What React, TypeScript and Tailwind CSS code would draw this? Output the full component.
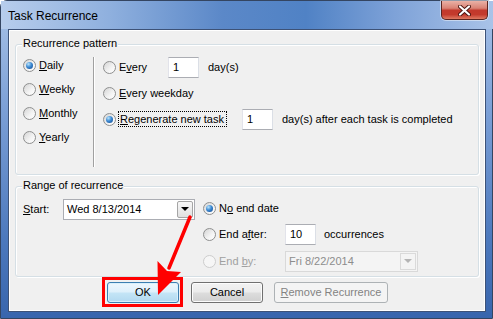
import React from 'react'

function Acc({ t, i }: { t: string; i: number }) {
  return (
    <>
      {t.slice(0, i)}
      <span className="underline underline-offset-[1px] decoration-1">{t[i]}</span>
      {t.slice(i + 1)}
    </>
  )
}

function Radio({ checked = false, disabled = false }: { checked?: boolean; disabled?: boolean }) {
  return (
    <span
      className={
        disabled
          ? 'flex h-[13px] w-[13px] shrink-0 items-center justify-center rounded-full border border-[#cdcdcd] bg-[#f6f6f6]'
          : 'flex h-[13px] w-[13px] shrink-0 items-center justify-center rounded-full border border-[#8e8f8f] bg-[linear-gradient(135deg,#d4d4d4,#f4f4f4_60%,#ffffff)]'
      }
    >
      {checked && (
        <span className="h-[7px] w-[7px] rounded-full bg-[radial-gradient(circle_at_35%_30%,#b9e4fb,#3d8ad3_45%,#164f97_90%)]" />
      )}
    </span>
  )
}

function TextBox({ value, w }: { value: string; w: string }) {
  return (
    <span className={`${w} flex h-[21px] items-center border border-[#abadb3] border-l-[#e2e3ea] border-r-[#dbdfe6] bg-white pl-[4px]`}>
      {value}
    </span>
  )
}

function Combo({ value, disabled = false, w }: { value: string; disabled?: boolean; w: string }) {
  return (
    <span
      className={
        disabled
          ? `${w} flex h-[21px] items-stretch border border-[#d9d9d9] bg-[#f4f4f4] text-[#8d8d8d]`
          : `${w} flex h-[21px] items-stretch border border-[#abadb3] bg-white`
      }
    >
      <span className="flex flex-1 items-center pl-[3px]">{value}</span>
      <span
        className={
          disabled
            ? 'm-[1px] flex w-[16px] items-center justify-center border border-[#dadada] bg-[#f4f4f4]'
            : 'm-[1px] flex w-[16px] items-center justify-center rounded-[2px] border border-[#a5a5a5] bg-[linear-gradient(#f7f7f7,#e1e1e1)]'
        }
      >
        <span
          className={
            disabled
              ? 'h-0 w-0 border-x-[4px] border-t-[4px] border-x-transparent border-t-[#b4b4b4]'
              : 'h-0 w-0 border-x-[4px] border-t-[4px] border-x-transparent border-t-black'
          }
        />
      </span>
    </span>
  )
}

function GroupBox({ title, className, children }: { title: string; className: string; children: React.ReactNode }) {
  return (
    <div className={`relative rounded-[3px] border border-[#d5dfe5] shadow-[inset_1px_1px_0_#fff,1px_1px_0_#fff] ${className}`}>
      <span className="absolute -top-[8px] left-[6px] bg-[#f0f0f0] px-[1px] leading-[13px]">{title}</span>
      {children}
    </div>
  )
}

export default function App() {
  return (
    <div className="relative h-[319px] w-[493px] font-['Liberation_Sans',Arial,sans-serif] text-[11px] text-black">
      <div className="flex h-full w-full flex-col rounded-t-[7px] border border-[#344561] bg-[linear-gradient(180deg,#a9c3e8_0%,#7b9fd6_35%,#4d79bd_75%,#3865ad_100%)] pb-[6px] pl-[7px] pr-[6px]">
        {/* title bar */}
        <div className="-mx-[7px] flex h-[28px] shrink-0 items-start bg-[linear-gradient(90deg,#b7cdec_0%,#8fb0de_22%,#5b88c8_45%,#5082c5_62%,#7ea2d8_80%,#a9c3e8_100%)] pl-[7px] pr-[6px]">
          <span className="mt-[8px] text-[12px] leading-[14px] text-black">Task Recurrence</span>
          <div className="-mr-[1px] ml-auto flex h-[19px] w-[47px] items-center justify-center rounded-b-[5px] border border-t-0 border-[#5b2520] bg-[linear-gradient(180deg,#eab1a6_0%,#d98274_40%,#c2392c_52%,#c33a2c_75%,#df7a62_100%)] shadow-[0_0_0_1px_rgba(255,255,255,0.45)]">
            <svg width="13" height="11" viewBox="0 0 13 11">
              <path d="M2 1.5 L11 9.5 M11 1.5 L2 9.5" stroke="#4a1510" strokeWidth="4" strokeLinecap="round" />
              <path d="M2 1.5 L11 9.5 M11 1.5 L2 9.5" stroke="#ffffff" strokeWidth="2.2" strokeLinecap="round" />
            </svg>
          </div>
        </div>

        {/* client area */}
        <div className="flex flex-1 flex-col border border-[#3d5277] bg-[#f0f0f0] px-[6px] pt-[14px] shadow-[inset_0_0_0_1px_#fff]">
          <GroupBox title="Recurrence pattern" className="h-[131px] shrink-0">
            <div className="flex">
              <div className="flex w-[77px] flex-col pl-[7px] pt-[8px]">
                <label className="flex h-[24px] items-center gap-[3px]">
                  <Radio checked />
                  <span><Acc t="Daily" i={0} /></span>
                </label>
                <label className="flex h-[24px] items-center gap-[3px]">
                  <Radio />
                  <span><Acc t="Weekly" i={0} /></span>
                </label>
                <label className="flex h-[24px] items-center gap-[3px]">
                  <Radio />
                  <span><Acc t="Monthly" i={0} /></span>
                </label>
                <label className="flex h-[24px] items-center gap-[3px]">
                  <Radio />
                  <span><Acc t="Yearly" i={0} /></span>
                </label>
              </div>
              <div className="mt-[12px] h-[110px] w-[2px] border-l border-r border-l-[#a0a0a0] border-r-white" />
              <div className="flex flex-col pl-[8px] pt-[9px]">
                <div className="flex h-[26px] items-center">
                  <Radio />
                  <span className="ml-[3px] w-[49px]"><Acc t="Every" i={1} /></span>
                  <TextBox value="1" w="w-[31px]" />
                  <span className="ml-[9px]">day(s)</span>
                </div>
                <div className="flex h-[26px] items-center">
                  <Radio />
                  <span className="ml-[3px]"><Acc t="Every weekday" i={0} /></span>
                </div>
                <div className="flex h-[26px] items-center">
                  <Radio checked />
                  <span className="ml-[2px] flex h-[16px] w-[109px] items-center border border-dotted border-black pl-[1px]">
                    <Acc t="Regenerate new task" i={0} />
                  </span>
                  <span className="ml-[15px]"><TextBox value="1" w="w-[31px]" /></span>
                  <span className="ml-[9px]">day(s) after each task is completed</span>
                </div>
              </div>
            </div>
          </GroupBox>

          <GroupBox title="Range of recurrence" className="mt-[11px] h-[91px] shrink-0">
            <div className="flex pl-[7px]">
              <div className="flex h-[26px] items-center pt-[0px] mt-[9px]">
                <span className="w-[40px]"><Acc t="Start:" i={0} /></span>
                <Combo value="Wed 8/13/2014" w="w-[132px]" />
              </div>
              <div className="ml-[8px] flex flex-col pt-[8px]">
                <div className="flex h-[26px] items-center">
                  <Radio checked />
                  <span className="ml-[3px]"><Acc t="No end date" i={1} /></span>
                </div>
                <div className="flex h-[26px] items-center">
                  <Radio />
                  <span className="ml-[3px] w-[66px]"><Acc t="End after:" i={5} /></span>
                  <TextBox value="10" w="w-[31px]" />
                  <span className="ml-[8px]">occurrences</span>
                </div>
                <div className="flex h-[28px] items-center">
                  <Radio disabled />
                  <span className="ml-[3px] w-[66px] text-[#a0a0a0]"><Acc t="End by:" i={4} /></span>
                  <Combo value="Fri 8/22/2014" w="w-[133px]" disabled />
                </div>
              </div>
            </div>
          </GroupBox>

          <div className="mt-[5px] flex h-[21px] shrink-0">
            <button className="ml-[92px] h-[21px] w-[72px] rounded-[3px] border border-[#3c7fb1] bg-[linear-gradient(180deg,#edf7fd_0%,#def0fb_48%,#c4e5f6_52%,#b2d9f0_100%)] shadow-[inset_0_0_0_1px_#d8f0fc]">
              OK
            </button>
            <button className="ml-[12px] h-[21px] w-[72px] rounded-[3px] border border-[#707070] bg-[linear-gradient(180deg,#f2f2f2_0%,#ebebeb_48%,#dddddd_52%,#cfcfcf_100%)] shadow-[inset_0_0_0_1px_#fcfcfc]">
              Cancel
            </button>
            <button className="ml-[11px] h-[21px] w-[114px] rounded-[3px] border border-[#adb2b5] bg-[#f4f4f4] text-[#838383]">
              <Acc t="Remove Recurrence" i={0} />
            </button>
          </div>
        </div>
      </div>

      {/* annotation overlay */}
      <div className="pointer-events-none absolute left-[102px] top-[277px] h-[30px] w-[81px] border-[3px] border-[#ff0000]" />
      <svg className="pointer-events-none absolute left-0 top-0" width="493" height="319" viewBox="0 0 493 319">
        <path d="M190 217 L169 268" stroke="#ff0000" strokeWidth="3.5" strokeLinecap="round" />
        <path d="M158 295 L157.5 261 L167 271 L181 272 Z" fill="#ff0000" />
      </svg>
    </div>
  )
}
